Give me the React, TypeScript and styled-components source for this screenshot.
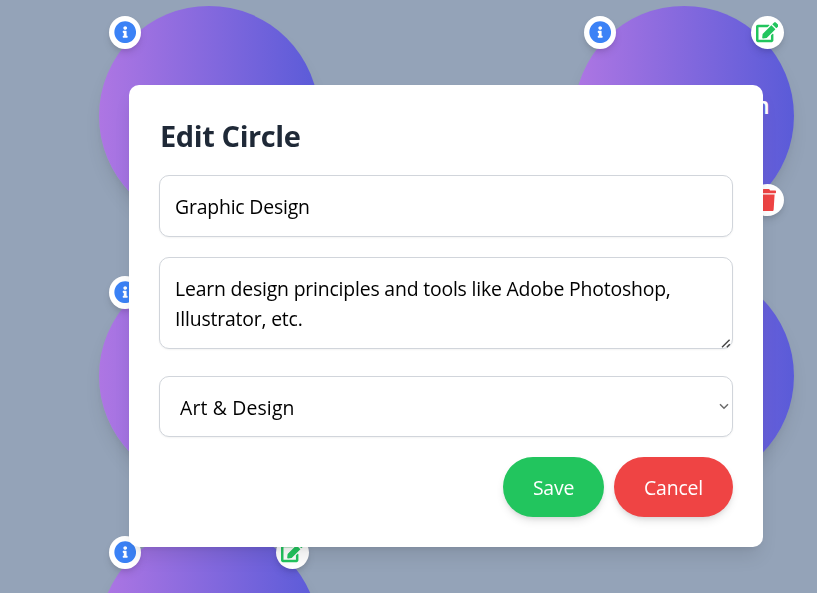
import React, { useState } from "react";
import styled, { createGlobalStyle } from "styled-components";
import { FaEdit, FaInfoCircle, FaTrash } from "react-icons/fa";

const GlobalStyle = createGlobalStyle`
  *, *::before, *::after { box-sizing: border-box; }
  body {
    margin: 0;
    overflow: hidden;
    background: #94a3b8;
    font-family: "Segoe UI", "Open Sans", sans-serif;
  }
`;

const Page = styled.main`
  width: 100vw;
  height: 100vh;
  overflow: hidden;
`;

const CircleGrid = styled.div`
  display: grid;
  grid-template-columns: 220px 220px;
  grid-auto-rows: 220px;
  column-gap: 255px;
  row-gap: 40px;
  padding: 6px 0 0 99px;
`;

const Circle = styled.article`
  position: relative;
  display: flex;
  flex-direction: column;
  align-items: center;
  padding-top: 83px;
  border-radius: 50%;
  background: linear-gradient(to right, #ae76e3, #5a5bd8);
  box-shadow: 0 12px 19px -4px rgba(0, 0, 0, 0.1), 0 5px 8px -5px rgba(0, 0, 0, 0.1);
`;

const CircleTitle = styled.h3`
  margin: 0;
  color: #fff;
  font-size: 24px;
  font-weight: 600;
  line-height: 32px;
  letter-spacing: -0.3px;
  white-space: nowrap;
`;

type Corner = "info" | "edit" | "remove";

const badgeColors: Record<Corner, string> = {
  info: "#3b82f6",
  edit: "#22c55e",
  remove: "#ef4444",
};

const badgePadding: Record<Corner, string> = {
  info: "0 0 1px",
  edit: "0 1px 1px 0",
  remove: "0 2px 0 0",
};

const Badge = styled.button<{ $kind: Corner }>`
  position: absolute;
  ${({ $kind }) => ($kind === "remove" ? "bottom: 10px;" : "top: 10px;")}
  ${({ $kind }) => ($kind === "info" ? "left: 10px;" : "right: 10px;")}
  display: flex;
  align-items: center;
  justify-content: center;
  width: ${({ $kind }) => ($kind === "info" ? 32 : 33)}px;
  height: ${({ $kind }) => ($kind === "remove" ? 32 : 33)}px;
  padding: ${({ $kind }) => badgePadding[$kind]};
  border: 0;
  border-radius: 50%;
  background: #fff;
  color: ${({ $kind }) => badgeColors[$kind]};
  font-size: 22.4px;
  box-shadow: 0 5px 8px -1px rgba(0, 0, 0, 0.1), 0 3px 5px -2px rgba(0, 0, 0, 0.1);

  svg {
    flex: none;
  }
`;

const Overlay = styled.div`
  position: fixed;
  inset: 0;
  display: flex;
  align-items: flex-start;
  padding: 85px 0 0 129px;
`;

const Dialog = styled.form`
  display: flex;
  flex-direction: column;
  width: 634px;
  height: 462px;
  padding: 30px;
  border-radius: 10px;
  background: #fff;
  box-shadow: 0 12px 19px -4px rgba(0, 0, 0, 0.1), 0 5px 8px -5px rgba(0, 0, 0, 0.1);
`;

const Heading = styled.h2`
  margin: 0 0 19px;
  padding: 1px 0 0 1px;
  color: #1f2937;
  font-size: 29px;
  font-weight: 700;
  line-height: 40px;
  letter-spacing: -0.4px;
`;

const fieldStyle = `
  display: block;
  width: 100%;
  margin: 0;
  border: 1px solid #d1d5db;
  border-radius: 10px;
  background: #fff;
  color: #000;
  font-family: inherit;
  font-size: 19.4px;
  line-height: 30px;
  letter-spacing: -0.18px;
  outline: none;
  box-shadow: 0 1px 2px rgba(0, 0, 0, 0.05);
`;

const NameInput = styled.input`
  ${fieldStyle}
  height: 62px;
  padding: 15px 15px 15px;
`;

const DescriptionWrap = styled.div`
  position: relative;
  margin: 20px 0 27px;
`;

const DescriptionInput = styled.textarea`
  ${fieldStyle}
  height: 92px;
  padding: 16px 15px 14px;
  resize: none;
  overflow: hidden;
`;

const ResizeGrip = styled.svg`
  position: absolute;
  right: 2px;
  bottom: 1px;
  width: 10px;
  height: 9px;
  pointer-events: none;
`;

const SelectWrap = styled.div`
  position: relative;
`;

const CategorySelect = styled.select`
  ${fieldStyle}
  appearance: none;
  height: 61px;
  padding: 16px 20px 14px;
  letter-spacing: 0.15px;
`;

const Chevron = styled.svg`
  position: absolute;
  top: 27px;
  right: 4px;
  width: 10px;
  height: 7px;
  pointer-events: none;
`;

const Actions = styled.div`
  display: flex;
  justify-content: flex-end;
  gap: 10px;
  margin-top: 20px;
`;

const ActionButton = styled.button<{ $danger?: boolean }>`
  width: ${({ $danger }) => ($danger ? 119 : 101)}px;
  height: 60px;
  padding: 2px 0 0;
  border: 0;
  border-radius: 30px;
  background: ${({ $danger }) => ($danger ? "#ef4444" : "#22c55e")};
  color: #fff;
  font-family: inherit;
  font-size: 19.4px;
  line-height: 30px;
  letter-spacing: -0.19px;
  box-shadow: 0 5px 8px -1px rgba(0, 0, 0, 0.1), 0 3px 5px -2px rgba(0, 0, 0, 0.1);
`;

const circles: { id: number; title?: string; owned?: boolean }[] = [
  { id: 1 },
  { id: 2, title: "Graphic Design", owned: true },
  { id: 3 },
  { id: 4 },
  { id: 5, owned: true },
];

export default function App() {
  const [name, setName] = useState("Graphic Design");
  const [description, setDescription] = useState(
    "Learn design principles and tools like Adobe Photoshop, Illustrator, etc."
  );

  return (
    <Page>
      <GlobalStyle />
      <CircleGrid>
        {circles.map(({ id, title, owned }) => (
          <Circle key={id}>
            {title && <CircleTitle>{title}</CircleTitle>}
            <Badge $kind="info" aria-label="Info"><FaInfoCircle /></Badge>
            {owned && <Badge $kind="edit" aria-label="Edit"><FaEdit /></Badge>}
            {owned && <Badge $kind="remove" aria-label="Delete"><FaTrash /></Badge>}
          </Circle>
        ))}
      </CircleGrid>
      <Overlay>
        <Dialog onSubmit={(e) => e.preventDefault()}>
          <Heading>Edit Circle</Heading>
          <NameInput value={name} onChange={(e) => setName(e.target.value)} />
          <DescriptionWrap>
            <DescriptionInput
              value={description}
              spellCheck={false}
              onChange={(e) => setDescription(e.target.value)}
            />
            <ResizeGrip viewBox="0 0 10 9" stroke="#444" strokeWidth="1.4">
              <path d="M1 8.2 8.6 0.8M5.8 8.2 8.8 5.2" />
            </ResizeGrip>
          </DescriptionWrap>
          <SelectWrap>
            <CategorySelect defaultValue="art">
              <option value="art">Art &amp; Design</option>
            </CategorySelect>
            <Chevron viewBox="0 0 10 7" fill="none" stroke="#6b6b6b" strokeWidth="1.5">
              <path d="M1 1.3 5 5.2 9 1.3" />
            </Chevron>
          </SelectWrap>
          <Actions>
            <ActionButton type="submit">Save</ActionButton>
            <ActionButton type="button" $danger>Cancel</ActionButton>
          </Actions>
        </Dialog>
      </Overlay>
    </Page>
  );
}
